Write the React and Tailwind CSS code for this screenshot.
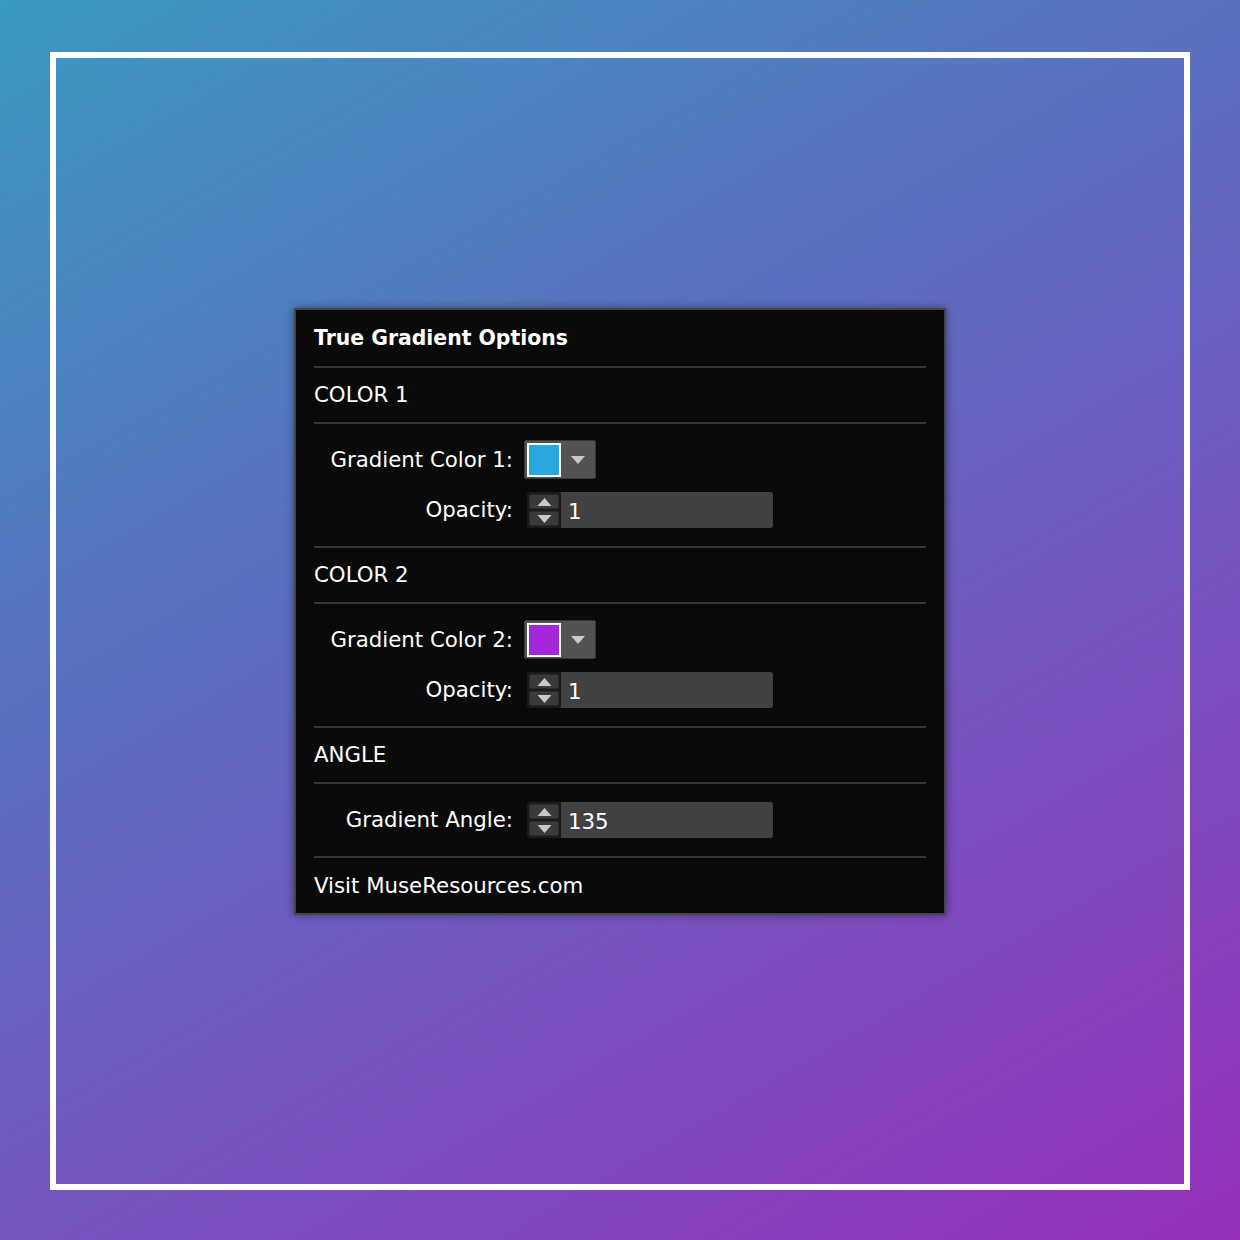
import React from "react";

// small gray triangle used by the dropdown and spinner buttons
function Tri({ up = false, w = 14, h = 8 }) {
  return (
    <svg width={w} height={h} viewBox="0 0 14 8" className="block">
      {up ? (
        <polygon points="7,0 14,8 0,8" fill="#c9c9c9" />
      ) : (
        <polygon points="0,0 14,0 7,8" fill="#c9c9c9" />
      )}
    </svg>
  );
}

function Divider() {
  return <div className="h-[2px] bg-[#363636]" />;
}

function SectionHeader({ children }) {
  return <div className="flex h-[54px] items-center text-[21.3px]">{children}</div>;
}

function Label({ children }) {
  return <div className="w-[199px] shrink-0 text-right text-[21.3px] leading-none">{children}</div>;
}

function ColorPicker({ color }) {
  return (
    <div className="ml-[11px] flex h-[39px] w-[72px] items-center rounded-[2px] border border-[#383838] bg-[#535353] pl-[2px]">
      <div className={`h-[34px] w-[34px] border-2 border-white ${color}`} />
      <div className="flex flex-1 justify-center">
        <Tri w={14} h={8} />
      </div>
    </div>
  );
}

function Spinner({ value }) {
  return (
    <div className="ml-[14px] flex h-[36px] w-[246px] rounded-[3px] bg-[#1b1b1b]">
      <div className="flex w-[34px] flex-col gap-[2px] p-[2px]">
        <div className="flex flex-1 items-center justify-center rounded-[2px] border border-[#2a2a2a] bg-[#3a3a3a]">
          <Tri up w={15} h={8} />
        </div>
        <div className="flex flex-1 items-center justify-center rounded-[2px] border border-[#2a2a2a] bg-[#3a3a3a]">
          <Tri w={15} h={8} />
        </div>
      </div>
      <div className="flex flex-1 items-center rounded-r-[3px] bg-[#414141] pl-[7px] pt-[3px] text-[21.3px]">
        {value}
      </div>
    </div>
  );
}

function FieldRow({ label, children }) {
  return (
    <div className="flex items-center">
      <Label>{label}</Label>
      {children}
    </div>
  );
}

export default function App() {
  return (
    <div className="h-[1240px] w-[1240px] bg-[linear-gradient(150deg,#3a99c1_0%,#6662bf_50%,#9630b9_100%)] px-[50px] pb-[50px] pt-[52px] font-['DejaVu_Sans',sans-serif] text-white">
      <div className="flex h-full justify-center border-[6px] border-white pt-[250px]">
        <div className="h-[607px] w-[652px] border-2 border-[#454545] bg-[#0a0a0a] px-[18px] shadow-[0_0_8px_rgba(0,0,0,0.45)]">
          <div className="flex h-[56px] items-center text-[20.4px] font-bold">True Gradient Options</div>
          <Divider />

          <SectionHeader>COLOR 1</SectionHeader>
          <Divider />
          <div className="flex flex-col gap-[13px] pb-[18px] pt-[16px]">
            <FieldRow label="Gradient Color 1:">
              <ColorPicker color="bg-[#27a7de]" />
            </FieldRow>
            <FieldRow label="Opacity:">
              <Spinner value="1" />
            </FieldRow>
          </div>
          <Divider />

          <SectionHeader>COLOR 2</SectionHeader>
          <Divider />
          <div className="flex flex-col gap-[13px] pb-[18px] pt-[16px]">
            <FieldRow label="Gradient Color 2:">
              <ColorPicker color="bg-[#a428d8]" />
            </FieldRow>
            <FieldRow label="Opacity:">
              <Spinner value="1" />
            </FieldRow>
          </div>
          <Divider />

          <SectionHeader>ANGLE</SectionHeader>
          <Divider />
          <div className="py-[18px]">
            <FieldRow label="Gradient Angle:">
              <Spinner value="135" />
            </FieldRow>
          </div>
          <Divider />

          <div className="flex h-[55px] items-center text-[21.3px]">Visit MuseResources.com</div>
        </div>
      </div>
    </div>
  );
}
